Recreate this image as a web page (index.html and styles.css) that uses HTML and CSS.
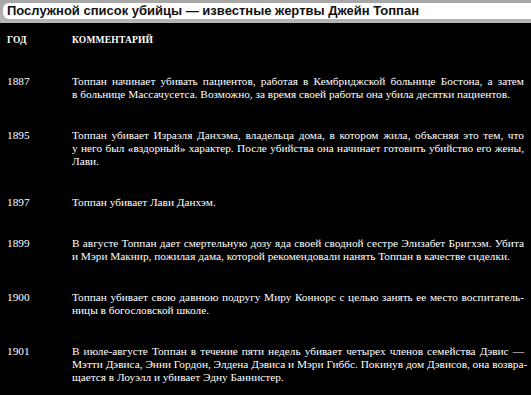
FILE: index.html
```
<!DOCTYPE html>
<html lang="ru">
<head>
<meta charset="utf-8">
<link rel="stylesheet" href="styles.css">
</head>
<body>
<div class="page">
  <div class="titlebar">
    <h1 class="title">Послужной список убийцы — известные жертвы Джейн Топпан</h1>
  </div>
  <div class="panel">
    <div class="row head">
      <div class="year">ГОД</div>
      <div class="text">КОММЕНТАРИЙ</div>
    </div>
    <div class="row">
      <div class="year">1887</div>
      <div class="text">
        <span class="ln">Топпан начинает убивать пациентов, работая в Кембриджской больнице Бостона, а затем</span>
        <span class="ln last">в больнице Массачусетса. Возможно, за время своей работы она убила десятки пациентов.</span>
      </div>
    </div>
    <div class="row">
      <div class="year">1895</div>
      <div class="text">
        <span class="ln">Топпан убивает Израэля Данхэма, владельца дома, в котором жила, объясняя это тем, что</span>
        <span class="ln">у него был «вздорный» характер. После убийства она начинает готовить убийство его жены,</span>
        <span class="ln last">Лави.</span>
      </div>
    </div>
    <div class="row">
      <div class="year">1897</div>
      <div class="text">
        <span class="ln last">Топпан убивает Лави Данхэм.</span>
      </div>
    </div>
    <div class="row">
      <div class="year">1899</div>
      <div class="text">
        <span class="ln">В августе Топпан дает смертельную дозу яда своей сводной сестре Элизабет Бригхэм. Убита</span>
        <span class="ln last">и Мэри Макнир, пожилая дама, которой рекомендовали нанять Топпан в качестве сиделки.</span>
      </div>
    </div>
    <div class="row">
      <div class="year">1900</div>
      <div class="text">
        <span class="ln">Топпан убивает свою давнюю подругу Миру Коннорс с целью занять ее место воспитатель-</span>
        <span class="ln last">ницы в богословской школе.</span>
      </div>
    </div>
    <div class="row">
      <div class="year">1901</div>
      <div class="text">
        <span class="ln">В июле-августе Топпан в течение пяти недель убивает четырех членов семейства Дэвис —</span>
        <span class="ln">Мэтти Дэвиса, Энни Гордон, Элдена Дэвиса и Мэри Гиббс. Покинув дом Дэвисов, она возвра-</span>
        <span class="ln last">щается в Лоуэлл и убивает Эдну Баннистер.</span>
      </div>
    </div>
  </div>
</div>
</body>
</html>
```
FILE: styles.css
```
html, body {
  margin: 0;
  padding: 0;
  background: #b2b2b2;
}
.page {
  height: 395px;
  overflow: hidden;
  display: flex;
  flex-direction: column;
  background: #b2b2b2;
}
.titlebar {
  padding: 3px 0 4px 3px;
  background: linear-gradient(#a6a6a6, #b6b6b6);
}
.title {
  margin: 0;
  height: 16px;
  background: #ffffff;
  border-radius: 6px 0 0 6px;
  padding: 0 0 0 4px;
  font-family: "Liberation Sans", Arial, sans-serif;
  font-weight: bold;
  font-size: 13px;
  line-height: 16px;
  color: #111;
  white-space: nowrap;
}
.panel {
  flex: 1;
  background: #000;
  border-bottom-left-radius: 12px;
  padding: 11px 7px 0 7px;
  color: #ffffff;
  font-family: "Liberation Serif", "Times New Roman", serif;
  font-size: 11.3px;
  line-height: 13px;
}
.row {
  display: grid;
  grid-template-columns: 65px 452px;
  margin-bottom: 28px;
}
.head {
  font-size: 9.5px;
  font-weight: bold;
  letter-spacing: 0.2px;
}
.ln {
  display: block;
  white-space: nowrap;
  text-align: justify;
  text-align-last: justify;
}
.ln.last {
  text-align-last: left;
}
```
